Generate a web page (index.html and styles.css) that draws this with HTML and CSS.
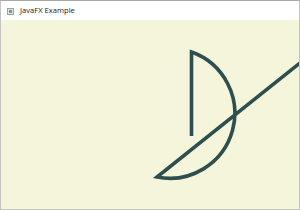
FILE: index.html
```html
<!DOCTYPE html>
<html>
<head>
<meta charset="utf-8">
<title>JavaFX Example</title>
<link rel="stylesheet" href="styles.css">
</head>
<body>
<div class="window">
  <div class="titlebar">
    <span class="app-icon"><span class="app-icon-inner"></span></span>
    <span class="title">JavaFX Example</span>
  </div>
  <div class="canvas">
    <svg class="drawing" width="298" height="189" viewBox="1 20 298 189" xmlns="http://www.w3.org/2000/svg">
      <path d="M191.5,136 L191.5,52 A65,65 0 0 1 157,177 L310,55" fill="none" stroke="#2f4f4f" stroke-width="3.6" stroke-linejoin="miter" stroke-linecap="butt"/>
    </svg>
  </div>
</div>
</body>
</html>
```
FILE: styles.css
```css
html, body {
  margin: 0;
  padding: 0;
  width: 300px;
  height: 210px;
  overflow: hidden;
  background: #ffffff;
}

.window {
  width: 300px;
  height: 210px;
  box-sizing: border-box;
  border: 1px solid #c4c4c4;
  border-top-color: #a8a8a8;
  display: flex;
  flex-direction: column;
  background: #ffffff;
}

.titlebar {
  height: 19px;
  flex: none;
  display: flex;
  align-items: center;
  padding-left: 6px;
  gap: 6px;
  background: #ffffff;
  font-family: "Open Sans", "Noto Sans", sans-serif;
  font-size: 7.6px;
  color: #222222;
}

.app-icon {
  width: 7px;
  height: 7px;
  box-sizing: border-box;
  border: 1px solid #9aa4a4;
  background: #dfe6e6;
  display: flex;
  align-items: center;
  justify-content: center;
  margin-top: 1px;
}

.app-icon-inner {
  width: 3px;
  height: 3px;
  background: #6e9c9c;
}

.title {
  line-height: 1;
  margin-top: 1px;
}

.canvas {
  flex: 1;
  background: #f5f5dc;
  overflow: hidden;
}

.drawing {
  display: block;
}
```
